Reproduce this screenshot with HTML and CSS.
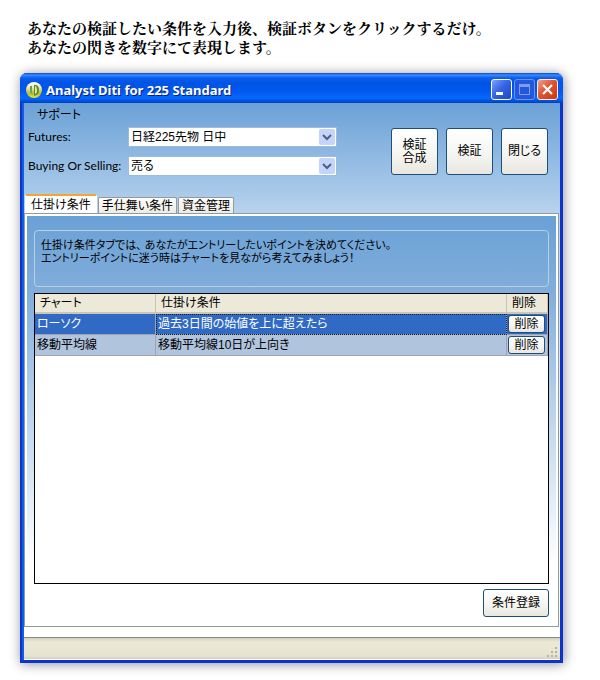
FILE: index.html
```
<!DOCTYPE html>
<html lang="ja">

<head>
  <meta charset="UTF-8" />
  <meta name="viewport" content="width=device-width, initial-scale=1.0" />
  <title>Analyst Diti for 225 Standard</title>
  <link rel="stylesheet" href="styles.css">
</head>

<body>
  <p class="lead">あなたの検証したい条件を入力後、検証ボタンをクリックするだけ。<br>あなたの閃きを数字にて表現します。</p>

  <div class="window">
    <div class="titlebar">
      <svg class="logo" width="16" height="16" viewBox="0 0 16 16">
        <defs>
          <linearGradient id="ball" x1="0" y1="0" x2="0" y2="1">
            <stop offset="0" stop-color="#ffffff" />
            <stop offset="0.35" stop-color="#e6ecb4" />
            <stop offset="0.7" stop-color="#b8bf2c" />
            <stop offset="1" stop-color="#e2e63c" />
          </linearGradient>
        </defs>
        <circle cx="8" cy="8" r="8" fill="url(#ball)" />
        <path d="M4 4h2v5c0 2 0 3 1 4C5 12 4 10 4 8z" fill="#6f9a60" />
        <path d="M8 3h1c3 0 4 2 4 5s-1 5-5 6z" fill="#5f8a3c" />
        <path d="M9 4c1 0 2 2 2 4s0 3-2 4z" fill="#e4e890" />
      </svg>
      <h1>Analyst Diti for 225 Standard</h1>
      <button class="caption" aria-label="最小化">
        <svg width="19" height="19" viewBox="0 0 19 19"><path d="M4 12h7v3H4z" fill="#fff" /></svg>
      </button>
      <button class="caption disabled" aria-label="最大化" disabled>
        <svg width="19" height="19" viewBox="0 0 19 19">
          <path d="M4.500 5.500h10v9h-10z" fill="none" stroke="#7c9df0" />
          <path d="M4 4h11v3H4z" fill="#7c9df0" />
        </svg>
      </button>
      <button class="caption close" aria-label="ウィンドウを閉じる">
        <svg width="19" height="19" viewBox="0 0 19 19"><path d="M5 5l9 9M14 5l-9 9" stroke="#fff" stroke-width="2.200" /></svg>
      </button>
    </div>

    <div class="form">
      <div class="top">
        <div class="settings">
          <div class="menu">サポート</div>
          <div class="field">
            <label for="futures">Futures:</label>
            <div class="combo">
              <select id="futures">
                <option>日経225先物 日中</option>
              </select>
              <svg class="arrow" width="16" height="16" viewBox="0 0 16 16"><path d="M4 6l4 4 4-4" /></svg>
            </div>
          </div>
          <div class="field">
            <label for="side">Buying Or Selling:</label>
            <div class="combo">
              <select id="side">
                <option>売る</option>
              </select>
              <svg class="arrow" width="16" height="16" viewBox="0 0 16 16"><path d="M4 6l4 4 4-4" /></svg>
            </div>
          </div>
        </div>
        <div class="actions">
          <button class="btn big">検証<br>合成</button>
          <button class="btn big">検証</button>
          <button class="btn big">閉じる</button>
        </div>
      </div>

      <div class="tabs" role="tablist">
        <button class="tab active" role="tab" aria-selected="true">仕掛け条件</button>
        <button class="tab" role="tab" aria-selected="false">手仕舞い条件</button>
        <button class="tab" role="tab" aria-selected="false">資金管理</button>
      </div>

      <div class="page">
        <p class="info">仕掛け条件タブでは、 あなたがエントリーしたいポイントを決めてください。<br>エントリーポイントに迷う時はチャートを見ながら考えてみましょう！</p>

        <div class="grid">
          <table>
            <thead>
              <tr>
                <th class="col-chart">チャート</th>
                <th>仕掛け条件</th>
                <th class="col-delete">削除</th>
              </tr>
            </thead>
            <tbody>
              <tr class="selected">
                <td>ローソク</td>
                <td class="focus">過去3日間の始値を上に超えたら</td>
                <td class="cell-btn"><button class="btn small">削除</button></td>
              </tr>
              <tr>
                <td>移動平均線</td>
                <td>移動平均線10日が上向き</td>
                <td class="cell-btn"><button class="btn small">削除</button></td>
              </tr>
            </tbody>
          </table>
        </div>

        <div class="page-footer">
          <button class="btn register">条件登録</button>
        </div>
      </div>

      <div class="statusbar">
        <svg width="12" height="12" viewBox="0 0 12 12">
          <path d="M9 1h2v2H9zM5 5h2v2H5zM9 5h2v2H9zM1 9h2v2H1zM5 9h2v2H5zM9 9h2v2H9z" fill="#b8b4a0" />
        </svg>
      </div>
    </div>
  </div>
</body>

</html>
```
FILE: styles.css
```
* {
  box-sizing: border-box;
}

body {
  margin: 0;
  padding: 20px 37px 18px 20px;
  background-color: white;
  color: #000;
  font-family: "Liberation Sans", "Noto Sans CJK JP", sans-serif;
  font-size: 12px;
  line-height: 12px;
  font-feature-settings: "palt";
}

button,
select {
  font: inherit;
  font-feature-settings: inherit;
  color: inherit;
}

.lead {
  margin: 0 0 15px 7px;
  font-family: "Liberation Serif", "Noto Serif CJK JP", "Noto Sans CJK JP", serif;
  font-size: 15px;
  font-weight: bold;
  line-height: 19px;
  font-feature-settings: normal;
  white-space: nowrap;
}

.window {
  border-style: solid;
  border-color: #0a34cc;
  border-width: 0 3px 3px 2px;
  border-radius: 7px 7px 0 0;
  background-color: #0a3fd8;
  box-shadow: 1px 1px 12px rgba(0, 0, 30, 0.45);
}

/* title bar */
.titlebar {
  display: flex;
  align-items: center;
  gap: 2px;
  height: 30px;
  margin: 0 -3px 0 -2px;
  padding: 3px 5px 0 6px;
  border-radius: 7px 7px 0 0;
  background: linear-gradient(#0848c8 0, #3a8cff 2px, #0a5cf0 5px, #0054e3 10px, #0058ee 18px, #0668ff 25px, #0050d8 28px, #0040c0 30px);
}

.titlebar h1 {
  flex: 1;
  margin: 0 0 0 2px;
  color: white;
  font-family: "Noto Sans", sans-serif;
  font-size: 13px;
  font-weight: bold;
  line-height: 16px;
  text-shadow: 1px 1px 0 #0a1f80;
  white-space: nowrap;
}

.caption {
  width: 21px;
  height: 21px;
  padding: 0;
  border: 1px solid white;
  border-radius: 3px;
  background: linear-gradient(135deg, #7fa2f4, #3566e4 45%, #1c48c8);
}

.caption svg {
  display: block;
}

.caption.disabled {
  border-color: #6f94ee;
  background: #2358dc;
}

.caption.close {
  border-color: #ffe8e0;
  background: linear-gradient(135deg, #f0a088, #e05430 45%, #c83a14);
}

/* form area */
.form {
  border-left: 2px solid #0f5ee8;
  background: linear-gradient(#6ba1d7 0, #b8d3ee 110px, white 360px);
}

.top {
  display: flex;
  justify-content: space-between;
  padding: 6px 12px 18px 4px;
}

.menu {
  margin: 0 0 6px 9px;
}

.field {
  display: flex;
  align-items: center;
  margin-bottom: 9px;
}

.field:last-child {
  margin-bottom: 0;
}

.field label {
  width: 100px;
  font-family: Lato, sans-serif;
  white-space: nowrap;
}

.combo {
  position: relative;
  width: 209px;
}

.combo select {
  display: block;
  width: 100%;
  height: 20px;
  padding: 0 18px 0 2px;
  border: 1px solid #9cbcd8;
  border-radius: 0;
  appearance: none;
  background-color: white;
}

.arrow {
  position: absolute;
  top: 2px;
  right: 2px;
  border-radius: 2px;
  background-color: #c4d4fa;
  pointer-events: none;
}

.arrow path {
  fill: none;
  stroke: #4d6185;
  stroke-width: 2;
}

.actions {
  display: flex;
  gap: 8px;
  padding-top: 19px;
}

.btn {
  padding: 0;
  border: 1px solid #1c4f7c;
  border-radius: 3px;
  background: linear-gradient(white, #f4f4f0 60%, #e8e6de);
  white-space: nowrap;
}

.big {
  width: 47px;
  height: 47px;
  line-height: 13px;
}

.small {
  display: block;
  width: 37px;
  height: 18px;
}

.register {
  width: 66px;
  height: 28px;
}

/* tabs */
.tabs {
  display: flex;
  align-items: flex-end;
  gap: 1px;
  height: 19px;
  padding-left: 1px;
}

.tab {
  height: 16px;
  padding: 0 3px;
  border: 1px solid #919b9c;
  border-bottom: 0;
  border-radius: 2px 2px 0 0;
  background: linear-gradient(#fdfdfb, #ecebe4);
  white-space: nowrap;
}

.tab.active {
  height: 19px;
  padding: 0 5px;
  border-color: white;
  border-top: 2px solid #f0a830;
  background: white;
}

.page {
  margin-right: 1px;
  padding: 14px 7px 7px;
  border: 3px solid white;
  outline: 1px solid #919b9c;
  outline-offset: -1px;
  background: linear-gradient(#6aa1d6 0, #81addb 75px, #b5d1ec 185px, white 350px);
}

.info {
  height: 57px;
  margin: 0 0 6px;
  padding: 8px 6px;
  border: 1px solid #bcd0dc;
  border-radius: 4px;
  font-size: 11px;
  line-height: 13px;
  white-space: nowrap;
}

.grid {
  min-height: 291px;
  border: 1px solid black;
  background-color: white;
}

table {
  width: 100%;
  border-collapse: separate;
  border-spacing: 0;
  table-layout: fixed;
}

th {
  height: 20px;
  padding: 0 5px;
  border-right: 1px solid #c8c5b4;
  border-bottom: 2px solid #cbc7b8;
  background-color: #ece9d8;
  font-weight: normal;
  text-align: left;
}

.col-chart {
  width: 121px;
}

.col-delete {
  width: 41px;
}

td {
  height: 21px;
  padding: 0 2px;
  border-right: 1px solid #a0a4ac;
  border-bottom: 1px solid #a0a4ac;
  background-color: #b0c4de;
  white-space: nowrap;
}

.selected td {
  background-color: #316ac5;
  color: white;
}

.selected .focus {
  outline: 1px dotted #1a1a1a;
  outline-offset: -1px;
}

.selected .btn {
  color: black;
}

td.cell-btn {
  padding: 0 1px;
}

.page-footer {
  display: flex;
  justify-content: flex-end;
  padding-top: 5px;
}

.statusbar {
  display: flex;
  justify-content: flex-end;
  align-items: flex-end;
  height: 23px;
  margin-top: 10px;
  padding: 0 2px 1px 0;
  border-top: 1px solid #8c8a80;
  border-bottom: 1px solid white;
  background: linear-gradient(#d4d0c0 0, #ece9d8 4px, #e6e3d0 18px, #d4d0bc);
}
```
